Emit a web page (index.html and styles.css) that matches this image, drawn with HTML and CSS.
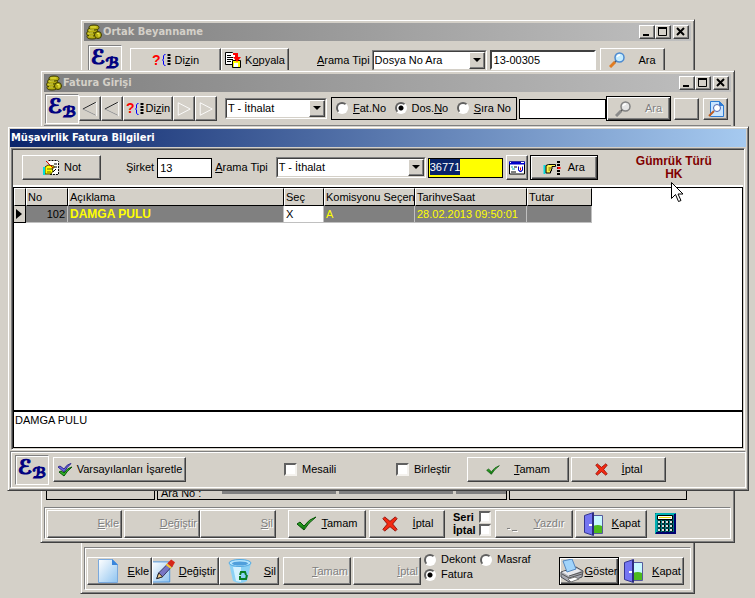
FILE: index.html
```html
<!DOCTYPE html>
<html lang="tr">
<head>
<meta charset="utf-8">
<title>Müşavirlik Fatura Bilgileri</title>
<link rel="stylesheet" href="styles.css">
</head>
<body>
<svg class="defs" aria-hidden="true">
  <defs>
    <linearGradient id="paper" x1="0" y1="0" x2="1" y2="1"><stop offset="0" stop-color="#fff"/><stop offset="1" stop-color="#8fc4f0"/></linearGradient>
    <linearGradient id="green" x1="0" y1="0" x2="0" y2="1"><stop offset="0" stop-color="#4fd040"/><stop offset="1" stop-color="#067006"/></linearGradient>
  </defs>
  <symbol id="coins" viewBox="0 0 16 16">
    <g fill="#b5ad10" stroke="#3c3a00">
      <ellipse cx="6" cy="12.500" rx="5" ry="2.500"/><ellipse cx="5.500" cy="9.500" rx="5" ry="2.500"/><ellipse cx="6.500" cy="6.500" rx="5" ry="2.500"/><ellipse cx="8" cy="3.500" rx="5" ry="2.500"/><circle cx="12" cy="11" r="3.500"/>
    </g>
    <path d="M4.500 3h6M3 6h5M2 9h5M3 12h4M11 9.500h2v3" fill="none" stroke="#f2ee50"/>
  </symbol>
  <symbol id="list" viewBox="0 0 10 14">
    <path d="M4.500 1.500H3.500L2.500 3V6L1.500 7L2.500 8V11L3.500 12.500H4.500" fill="none" stroke="#00f"/>
    <path d="M8 1v12" stroke="#000" stroke-width="3" stroke-dasharray="2 1"/>
  </symbol>
  <symbol id="copy" viewBox="0 0 16 16">
    <path d="M.5.5h7l3 3v9H.500z" fill="#fff" stroke="#000"/><path d="M2 3.500h4M2 5.500h6M2 7.500h6M2 9.500h4" stroke="#000"/>
    <path d="M7.500 8.500h8v7h-8z" fill="#ff0" stroke="#000"/><path d="M9 11h4v4H9z" fill="#fff"/><path d="M8 1h5v4h3l-4 5-4-5h2V3H8z" fill="#f00"/>
  </symbol>
  <symbol id="lens" viewBox="0 0 16 16">
    <path d="M1 15l5-5" stroke="#e07b20" stroke-width="3"/><path d="M6 10l2-2" stroke="#555" stroke-width="2"/>
    <circle cx="10.500" cy="5.500" r="4.500" fill="#c4ecff" stroke="#4c8ad0" stroke-width="1.500"/><path d="M8 5q1-2 3-2" fill="none" stroke="#fff" stroke-width="1.500"/>
  </symbol>
  <symbol id="prev" viewBox="0 0 18 18"><path d="M16.500 1.500v15L1 9z" fill="none" stroke="#fff"/><path d="M15.500 1.500L1 9" stroke="#000"/><path d="M15.500 16L1 9" fill="none" stroke="#808080"/></symbol>
  <symbol id="next" viewBox="0 0 18 18"><path d="M2.500 2v14L16 9z" fill="none" stroke="#fff"/></symbol>
  <symbol id="note" viewBox="0 0 16 16">
    <path d="M5.500.5h9l1 1v13h-9" fill="#fff" stroke="#000" stroke-dasharray="2 1"/><path d="M11 4h3M11 7h3M10 12l3-3" stroke="#000"/>
    <path d="M2 7L5 5l6 1v2H9l1 3-2 3H2z" fill="#ff0" stroke="#444000"/><path d="M0 7h2v8H0z" fill="#0dd"/><path d="M3 1l7 7" stroke="#d80000"/><path d="M4 9h5M4 12h4" stroke="#666000"/>
  </symbol>
  <symbol id="hand" viewBox="0 0 17 16">
    <path d="M0 5h2v9H0z" fill="#0dd"/><path d="M2.500 5.500L5 4.500h7v2H8.500V9H8v2H7v2H2.500z" fill="#fff34a" stroke="#000"/><path d="M5 8h3M5 10h2" stroke="#666000"/>
    <path d="M15 1v15" stroke="#000" stroke-width="3" stroke-dasharray="2 1"/><path d="M14 7h3v2h-3z" fill="#f00"/>
  </symbol>
  <symbol id="form" viewBox="0 0 16 13">
    <path d="M.5.5h15v12H.500z" fill="#fff" stroke="#000"/><path d="M0 0h16v3H0z" fill="#00c"/><path d="M1 1h1M12 1h3" stroke="#fff"/>
    <path d="M2 5.500h2M3 7.500h3" stroke="#0aa"/><path d="M5 5.500h3M2 10.500h5" stroke="#000"/><path d="M9.500 5v4h1v1h2V9h1V5" fill="none" stroke="#00c"/><path d="M11.500 6v3" stroke="#d00"/>
  </symbol>
  <symbol id="tick" viewBox="0 0 21 15"><path d="M1 8l3-2 4 4Q13 3 20 1 12 7 8 14z" fill="url(#green)" stroke="#064f06"/></symbol>
  <symbol id="ticks" viewBox="0 0 16 14">
    <path d="M1 4l2-1 4 3Q10 1 14 .5 10 4 7 9z" fill="#6a62e0" stroke="#302a90"/><path d="M2 9l2-1 3 2Q10 5 15 4 10 8 7 13z" fill="#2fb52a" stroke="#075507"/>
  </symbol>
  <symbol id="cross" viewBox="0 0 18 18"><path d="M3 1l6 5 6-5 2 2-5 6 5 6-2 2-6-5-6 5-2-2 5-6-5-6z" fill="#f32a12" stroke="#8c0b04"/></symbol>
  <symbol id="page" viewBox="0 0 20 24"><path d="M.5.5h14l5 5v18H.500z" fill="url(#paper)" stroke="#7aa9dd"/><path d="M14 0v6h6z" fill="#3a86dc"/></symbol>
  <symbol id="edit" viewBox="0 0 25 24">
    <path d="M.5 2.500h19v21H.500z" fill="url(#paper)" stroke="#4d94dd"/><path d="M6 20l2-6L18 4l4 3-10 11z" fill="#7875c4" stroke="#33305f"/><path d="M6 20l2-6 4 4z" fill="#f1cf91" stroke="#222"/><path d="M17 4l4-4 4 3-3 5z" fill="#d62618"/><path d="M16 5l5 4" stroke="#ffc928" stroke-width="2"/>
  </symbol>
  <symbol id="bin" viewBox="0 0 24 24">
    <path d="M1 4l4 18q7 4 14 0l4-18z" fill="#8bd1f5"/><path d="M5 8l3 14 5 1V8z" fill="#d3f1ff"/><ellipse cx="12" cy="4" rx="11" ry="3.500" fill="#b5e4fc" stroke="#53a9e2"/><ellipse cx="12" cy="4.500" rx="8" ry="2" fill="#4f9fdc"/>
    <path d="M12 16l1-3h4l1 3M19 16l-1 4h-3M12 17v3h3" fill="none" stroke="#087f24" stroke-width="2"/>
  </symbol>
  <symbol id="door" viewBox="0 0 20 24">
    <path d="M8.500 3.500h10v18h-10z" fill="#c8f8ff" stroke="#555a9c"/><path d="M9 14q5-2 9 0v7H9z" fill="#4cba1c"/><path d="M.5 3.500l9-3v23l-9-3z" fill="#7475f2" stroke="#34358f"/><path d="M9 1v22" stroke="#2c2c80" stroke-width="2"/><path d="M5 12h3v2H5z" fill="#fff"/>
  </symbol>
  <symbol id="printer" viewBox="0 0 24 24">
    <path d="M1 13l15-5 7 4-1 6-13 5-8-5z" fill="#a9abb4" stroke="#4b4c53"/><path d="M2 13l14-4 5 3-12 5z" fill="#e8e9ed"/><path d="M3 2l9-2 4 10-9 3z" fill="#a1d4fb" stroke="#5387c0"/><path d="M9 17l13-4M2 15l7 4 13-4" fill="none" stroke="#555"/><path d="M8 20l7-2 4 2-8 3z" fill="#fff" stroke="#777"/>
  </symbol>
  <symbol id="calc" viewBox="0 0 21 21">
    <path d="M0 0h21v21H0z" fill="#007880"/><path d="M1 20V1h19" fill="none" stroke="#00e4e4"/><path d="M20 1v19H1" fill="none" stroke="#000070" stroke-width="2"/><path d="M2.500 2.500h15v4h-15z" fill="#fff" stroke="#000"/><path d="M4 4.500h12" stroke="#e8d800"/>
    <path d="M3 9h15M3 13h15M3 17h15" stroke="#000" stroke-width="3" stroke-dasharray="3 1"/><path d="M3 9h15M3 13h15M3 17h15" stroke="#ddd" stroke-width="2" stroke-dasharray="2 2"/>
  </symbol>
  <symbol id="preview" viewBox="0 0 16 16"><path d="M2.500.5h9l4 4v11h-13z" fill="#c9e5ff" stroke="#2d7bd3"/><path d="M11 0v5h5z" fill="#2d7bd3"/><circle cx="9" cy="7" r="3.500" fill="#fff" stroke="#4d63ad"/><path d="M6 10l-5 5" stroke="#bd5c22" stroke-width="2"/></symbol>
  <symbol id="min" viewBox="0 0 12 10"><path d="M2 8h6" stroke="#000" stroke-width="2"/></symbol>
  <symbol id="max" viewBox="0 0 12 10"><path d="M1.500 1v7.500h8V1" fill="none" stroke="#000"/><path d="M1 1h9" stroke="#000" stroke-width="2"/></symbol>
  <symbol id="close" viewBox="0 0 12 10"><path d="M2 1l7 7M9 1L2 8" stroke="#000" stroke-width="2"/></symbol>
</svg>

<main class="desktop">
  <section class="window win-back" aria-label="Ortak Beyanname">
    <header class="title"><svg class="i16"><use href="#coins"/></svg><h2>Ortak Beyanname</h2>
      <button class="cap" aria-label="Küçült"><svg><use href="#min"/></svg></button><button class="cap" aria-label="Büyüt"><svg><use href="#max"/></svg></button><button class="cap cap-close" aria-label="Kapat"><svg><use href="#close"/></svg></button>
    </header>
    <div class="bar back-bar">
      <div class="logo"><span>ℰ</span><span>ℬ</span></div>
      <button class="btn w91 gap8"><b class="ask">?</b><svg class="list"><use href="#list"/></svg><span>Di<u>z</u>in</span></button>
      <button class="btn w68"><svg class="i16"><use href="#copy"/></svg><span>K<u>o</u>pyala</span></button>
      <label class="gap28" for="tip1"><u>A</u>rama Tipi</label>
      <span class="combo w115 gap2"><select id="tip1"><option>Dosya No Ara</option></select><i></i></span>
      <input class="field sunk w106 gap3" aria-label="Dosya No" value="13-00305">
      <button class="btn w65 gap4 wide"><svg class="i16"><use href="#lens"/></svg><span>Ara</span></button>
    </div>
    <div class="fill"></div>
    <footer class="bar back-foot group">
      <button class="btn tall end w65"><svg class="i24"><use href="#page"/></svg><span><u>E</u>kle</span></button>
      <button class="btn tall end w67"><svg class="i24"><use href="#edit"/></svg><span><u>D</u>eğiştir</span></button>
      <button class="btn tall end w60"><svg class="i24"><use href="#bin"/></svg><span><u>S</u>il</span></button>
      <button class="btn tall end w68 gap4" disabled><span><u>T</u>amam</span></button>
      <button class="btn tall end w68 gap2" disabled><span><u>İ</u>ptal</span></button>
      <div class="radios gap3">
        <label><input type="radio" name="tur">Dekont</label><label><input type="radio" name="tur">Masraf</label>
        <label><input type="radio" name="tur" checked>Fatura</label>
      </div>
      <button class="btn tall focus w60 gap28"><svg class="i24"><use href="#printer"/></svg><span><u>G</u>öster</span></button>
      <button class="btn tall w65 wide-s"><svg class="i24"><use href="#door"/></svg><span><u>K</u>apat</span></button>
    </footer>
  </section>

  <section class="window win-mid" aria-label="Fatura Girişi">
    <header class="title"><svg class="i16"><use href="#coins"/></svg><h2>Fatura Girişi</h2>
      <button class="cap" aria-label="Küçült"><svg><use href="#min"/></svg></button><button class="cap" aria-label="Büyüt"><svg><use href="#max"/></svg></button><button class="cap cap-close" aria-label="Kapat"><svg><use href="#close"/></svg></button>
    </header>
    <div class="bar mid-bar">
      <div class="logo"><span>ℰ</span><span>ℬ</span></div>
      <button class="btn w22" aria-label="İlk"><svg class="i18"><use href="#prev"/></svg></button>
      <button class="btn w22" aria-label="Önceki"><svg class="i18"><use href="#prev"/></svg></button>
      <button class="btn w50"><b class="ask">?</b><svg class="list"><use href="#list"/></svg><span>Di<u>z</u>in</span></button>
      <button class="btn w22" aria-label="Sonraki"><svg class="i18"><use href="#next"/></svg></button>
      <button class="btn w22" aria-label="Son"><svg class="i18"><use href="#next"/></svg></button>
      <span class="combo w102 gap8"><select aria-label="Tip"><option>T - İthalat</option></select><i></i></span>
      <div class="radio-box gap4">
        <label><input type="radio" name="no"><span><u>F</u>at.No</span></label><label><input type="radio" name="no" checked><span>Dos.<u>N</u>o</span></label><label><input type="radio" name="no"><span><u>S</u>ıra No</span></label>
      </div>
      <input class="field w87 gap2" aria-label="Aranan No">
      <button class="btn focus w65 wide" disabled><svg class="i16"><use href="#lens"/></svg><span>Ara</span></button>
      <button class="btn sq gap3" aria-label="Boş"></button>
      <button class="btn sq gap4" aria-label="Önizleme"><svg class="i18"><use href="#preview"/></svg></button>
    </div>
    <div class="fill"></div>
    <div class="boxes"><div class="box"></div><div class="box box-main"><span>Ara No :</span><i class="w115"></i><i class="w115"></i><i class="w50"></i></div><div class="box box-last"></div></div>
    <footer class="bar mid-foot group">
      <button class="btn tall end w75" disabled><span><u>E</u>kle</span></button>
      <button class="btn tall end w76 gap2" disabled><span><u>D</u>eğiştir</span></button>
      <button class="btn tall end w76" disabled><span><u>S</u>il</span></button>
      <button class="btn tall w78 gap12"><svg class="tick-l"><use href="#tick"/></svg><span><u>T</u>amam</span></button>
      <button class="btn tall w76 gap3 wide"><svg class="i18"><use href="#cross"/></svg><span><u>İ</u>ptal</span></button>
      <div class="checks gap8"><label><span>Seri</span><input type="checkbox"></label><label><span>İptal</span><input type="checkbox"></label></div>
      <button class="btn tall w78 gap4 wide" disabled><svg class="i16" viewBox="0 0 16 16"><path d="M3 12.500h3M8 14.500h5" stroke="#808080"/><path d="M4 13.500h3M9 15.500h5" stroke="#fff"/></svg><span><u>Y</u>azdır</span></button>
      <button class="btn tall w72 gap2 wide-s"><svg class="i24"><use href="#door"/></svg><span><u>K</u>apat</span></button>
      <svg class="calc gap8" role="img" aria-label="Hesap makinesi"><use href="#calc"/></svg>
    </footer>
  </section>

  <section class="window win-front" aria-label="Müşavirlik Fatura Bilgileri">
    <header class="title active"><h1>Müşavirlik Fatura Bilgileri</h1></header>
    <div class="client">
      <div class="bar front-bar">
        <button class="btn w79"><svg class="i18"><use href="#note"/></svg><span>Not</span></button>
        <label class="gap25" for="sirket">Şirket</label>
        <input class="field w55 gap3" id="sirket" value="13">
        <label class="gap3" for="tip3"><u>A</u>rama Tipi</label>
        <span class="combo w150 gap8"><select id="tip3"><option>T - İthalat</option></select><i></i></span>
        <div class="field yellow w75 gap2" role="textbox" tabindex="0" aria-label="Dosya" contenteditable="true"><mark>36771</mark></div>
        <button class="btn w22 gap3" aria-label="Form"><svg class="i16"><use href="#form"/></svg></button>
        <button class="btn focus w68 gap2"><svg class="i18"><use href="#hand"/></svg><span class="gap3">Ara</span></button>
        <p class="kind">Gümrük Türü<br>HK</p>
      </div>
      <div class="grid">
        <table>
          <colgroup><col class="c12"><col class="c42"><col class="c216"><col class="c40"><col class="c91"><col class="c112"><col class="c65"></colgroup>
          <thead><tr><th></th><th>No</th><th>Açıklama</th><th>Seç</th><th>Komisyonu Seçen</th><th>TarihveSaat</th><th>Tutar</th></tr></thead>
          <tbody><tr><td class="mark"><i></i></td><td class="num">102</td><td class="name">DAMGA PULU</td><td class="sel">X</td><td>A</td><td>28.02.2013 09:50:01</td><td></td></tr></tbody>
        </table>
      </div>
      <textarea aria-label="Açıklama">DAMGA PULU</textarea>
    </div>
    <footer class="bar front-foot group">
      <div class="logo"><span>ℰ</span><span>ℬ</span></div>
      <button class="btn w133 gap4"><svg class="i16"><use href="#ticks"/></svg><span>Varsayılanları İşaretle</span></button>
      <label class="check mesaili"><input type="checkbox">Mesaili</label>
      <label class="check birlestir"><input type="checkbox">Birleştir</label>
      <button class="btn wide w102"><svg class="tick-s"><use href="#tick"/></svg><span><u>T</u>amam</span></button>
      <button class="btn wide w95 gap2"><svg class="cross-s"><use href="#cross"/></svg><span><u>İ</u>ptal</span></button>
    </footer>
  </section>
  <svg class="cursor" viewBox="0 0 13 21" aria-hidden="true"><path d="M.5.500v16l4-4 3 7 2.500-1-3-6.500h5z" fill="#fff" stroke="#000"/></svg>
</main>
</body>
</html>
```
FILE: styles.css
```css
* { box-sizing: border-box; }
body { margin: 0; background: #d4d0c8; color: #000; font: 11px/13px "Liberation Sans", Arial, sans-serif; }
button, input, select, textarea { font: inherit; color: inherit; margin: 0; border-radius: 0; }
.defs { position: absolute; width: 0; height: 0; }
.desktop { position: relative; height: 100vh; overflow: hidden; }
svg { display: block; flex: none; }
u { text-underline-offset: 1px; }

/* windows */
.window { position: absolute; display: flex; flex-direction: column; padding: 2px; background: #d4d0c8; border: 1px solid; border-color: #d4d0c8 #404040 #404040 #d4d0c8; box-shadow: inset 1px 1px #fff, inset -1px -1px #808080; }
.win-back { left: 80px; right: 60px; top: 19px; bottom: 4px; padding: 3px; }
.win-mid { left: 40px; right: 20px; top: 70px; bottom: 55px; padding: 3px; }
.win-front { left: 7px; right: 6px; top: 126px; bottom: 107px; }
.title { display: flex; align-items: center; flex: none; height: 18px; padding: 0 2px; background: linear-gradient(90deg, #808080, #c0c0c0); color: #d4d0c8; }
.title.active { background: linear-gradient(90deg, #0a246a, #a6caf0); color: #fff; padding: 0 1px; }
.title h1, .title h2 { flex: 1; margin: 0 1px; font: bold 11px/18px "DejaVu Sans Condensed", "DejaVu Sans", sans-serif; white-space: nowrap; }
.title.active h1 { margin: 0; }
.cap { width: 16px; height: 14px; padding: 0 1px; background: #d4d0c8; border: 1px solid; border-color: #fff #404040 #404040 #fff; box-shadow: inset -1px -1px #808080; }
.cap svg { width: 12px; height: 10px; }
.cap-close { margin-left: 2px; }
.fill { flex: 1; }

/* bars */
.bar { display: flex; flex: none; align-items: center; white-space: nowrap; }
.bar > * { flex: none; }
.group { border: 1px solid; border-color: #808080 #fff #fff #808080; box-shadow: inset 1px 1px #fff; }
.back-bar { height: 38px; padding: 0 4px; }
.back-bar .logo { align-self: flex-start; margin-top: 4px; }
.mid-bar { height: 34px; padding: 0 1px; border-bottom: 1px solid #808080; }
.back-foot { height: 43px; padding: 5px 2px 0; }
.mid-foot { height: 32px; padding: 1px 2px 0; }
.front-bar { height: 37px; padding: 0 9px; border-bottom: 2px solid #fff; }
.front-foot { height: 37px; padding: 0 4px; }
.logo { display: flex; width: 34px; height: 30px; border: 1px solid; border-color: #808080 #fff #fff #808080; box-shadow: inset 1px 1px #fff; color: #000080; font: italic bold 20px/22px "DejaVu Serif", "DejaVu Sans", serif; justify-content: center; -webkit-text-stroke: 1px #000080; }
.logo span + span { font-size: 15px; line-height: 34px; }

/* buttons */
.btn { display: flex; align-items: center; justify-content: center; gap: 4px; height: 25px; padding: 0 2px; background: #d4d0c8; border: 1px solid; border-color: #fff #404040 #404040 #fff; box-shadow: inset -1px -1px #808080; white-space: nowrap; overflow: hidden; }
.tall { height: 28px; }
.end { justify-content: flex-end; }
.end svg { margin-right: auto; margin-left: 6px; }
.end.w67 svg { margin-left: 0; }
.wide { gap: 14px; }
.wide-s { gap: 6px; }
.focus { border-color: #000; box-shadow: inset 1px 1px #fff, inset -1px -1px #404040, inset -2px -2px #808080; }
.tall.focus { gap: 0; padding: 0 1px; }
.btn:disabled { color: #808080; text-shadow: 1px 1px #fff; }
.btn:disabled svg { filter: grayscale(1); }
.sq { width: 25px; height: 22px; }
.ask { margin-right: -4px; color: #f00; font-size: 14px; }
.w50 { width: 50px; }
.btn.w50 { gap: 2px; padding: 0; }
.w50 .ask { margin-right: -3px; }

/* fields */
.field { height: 20px; padding: 0 2px; border: 1px solid #000; background: #fff; }
.sunk { border: 2px solid; border-color: #404040 #fff #fff #404040; }
.yellow { background: #ff0; padding: 0 1px; line-height: 16px; }
mark { display: inline-block; background: #0a246a; color: #fff; }
.combo { position: relative; display: block; height: 21px; border: 1px solid; border-color: #808080 #fff #fff #808080; background: #fff; }
.combo select { display: block; width: 100%; height: 19px; padding: 0 20px 0 1px; border: 1px solid; border-color: #404040 #d4d0c8 #d4d0c8 #404040; background: #fff; appearance: none; }
.combo i { position: absolute; top: 1px; right: 1px; width: 16px; height: 17px; background: #d4d0c8; border: 1px solid; border-color: #fff #404040 #404040 #fff; box-shadow: inset -1px -1px #808080; pointer-events: none; }
.combo i::after { content: ""; position: absolute; left: 3px; top: 5px; border: 4px solid transparent; border-top-color: #000; border-bottom: 0; }
input[type="radio"] { flex: none; width: 12px; height: 12px; appearance: none; border: 2px solid; border-color: #606060 #fff #fff #606060; border-radius: 50%; background: #fff; }
input[type="radio"]:checked { background: radial-gradient(circle, #000 2px, #fff 3px); }
input[type="checkbox"] { flex: none; width: 13px; height: 13px; appearance: none; border: 2px solid; border-color: #606060 #f4f2ee #f4f2ee #606060; background: #fff; }
.radio-box { display: flex; align-items: center; justify-content: space-between; width: 186px; height: 23px; padding: 0 5px 0 4px; border: 1px solid #000; }
.radio-box label { display: flex; gap: 5px; }
.radios { display: grid; grid-template-columns: 56px 51px; gap: 2px 0; align-self: flex-start; }
.radios label, .check { display: flex; align-items: center; gap: 5px; }
.checks { width: 38px; font-weight: bold; }
.checks label { display: flex; justify-content: space-between; }
.checks input { width: 12px; height: 12px; }
.mesaili { width: 112px; margin-left: 98px; }
.birlestir { width: 71px; }
.kind { margin: 0; color: #800000; font-weight: bold; font-size: 12px; text-align: center; }
.front-bar .kind { flex: 1; padding-left: 16px; }

/* framed fields behind the dialog */
.boxes { display: flex; flex: none; gap: 2px; height: 20px; margin: 0 2px 7px; }
.box { width: 109px; border: 1px solid #000; }
.box-main { display: flex; gap: 3px; width: 350px; padding-left: 3px; }
.box-main span { width: 58px; line-height: 24px; }
.box-main i { height: 13px; background: #808080; }
.box-last { width: 178px; }

/* dialog */
.client { display: flex; flex: 1; flex-direction: column; min-height: 0; margin: 1px; border: 1px solid #808080; border-right-color: #fff; border-bottom-color: #fff; box-shadow: inset 1px 1px #404040; padding: 1px; }
.grid { flex: 1; border: 1px solid #000; background: #fff; min-height: 0; }
table { width: 578px; table-layout: fixed; border-collapse: separate; border-spacing: 0; }
th, td { overflow: hidden; height: 17px; padding: 0 2px; text-align: left; white-space: nowrap; }
th { height: 18px; padding: 0 0 0 1px; background: #d4d0c8; border: 1px solid; border-color: #fff #000 #000 #fff; font-weight: normal; }
td { background: #808080; color: #ff0; border-right: 1px solid #c0c0c0; border-bottom: 1px solid #c0c0c0; }
td.num { color: #000; text-align: right; }
td.name { font-weight: bold; font-size: 12px; }
td.sel { background: #fff; color: #000; }
td.mark { background: #d4d0c8; border-color: #000; }
.mark i { display: block; width: 0; border: 5px solid transparent; border-left: 6px solid #000; border-right: 0; }
textarea { display: block; flex: none; width: 100%; height: 37px; padding: 2px 1px; border: 1px solid #000; background: #fff; resize: none; outline: 0; }
.cursor { position: absolute; left: 671px; top: 182px; width: 13px; height: 21px; }

/* icon sizes */
.i16 { width: 16px; height: 16px; }
.i18 { width: 18px; height: 16px; }
.i24 { width: 24px; height: 24px; }
.list { width: 10px; height: 14px; }
.tick-l { width: 21px; height: 15px; }
.tick-s { width: 14px; height: 10px; }
.cross-s { width: 13px; height: 13px; }
.calc { width: 21px; height: 21px; }

/* spacing and widths */
.gap2 { margin-left: 2px; }
.gap3 { margin-left: 3px; }
.gap4 { margin-left: 4px; }
.gap8 { margin-left: 8px; }
.gap12 { margin-left: 12px; }
.gap25 { margin-left: 25px; }
.gap28 { margin-left: 28px; }
.w22 { width: 22px; } .w55 { width: 55px; }
.w60 { width: 60px; } .w65 { width: 65px; } .w67 { width: 67px; } .w68 { width: 68px; }
.w72 { width: 72px; } .w75 { width: 75px; } .w76 { width: 76px; } .w78 { width: 78px; }
.w79 { width: 79px; } .w87 { width: 87px; } .w91 { width: 91px; } .w95 { width: 95px; }
.w102 { width: 102px; } .w106 { width: 106px; } .w115 { width: 115px; } .w133 { width: 133px; } .w150 { width: 150px; }
.c12 { width: 12px; } .c42 { width: 42px; } .c216 { width: 216px; } .c40 { width: 40px; }
.c91 { width: 91px; } .c112 { width: 112px; } .c65 { width: 65px; }
```
